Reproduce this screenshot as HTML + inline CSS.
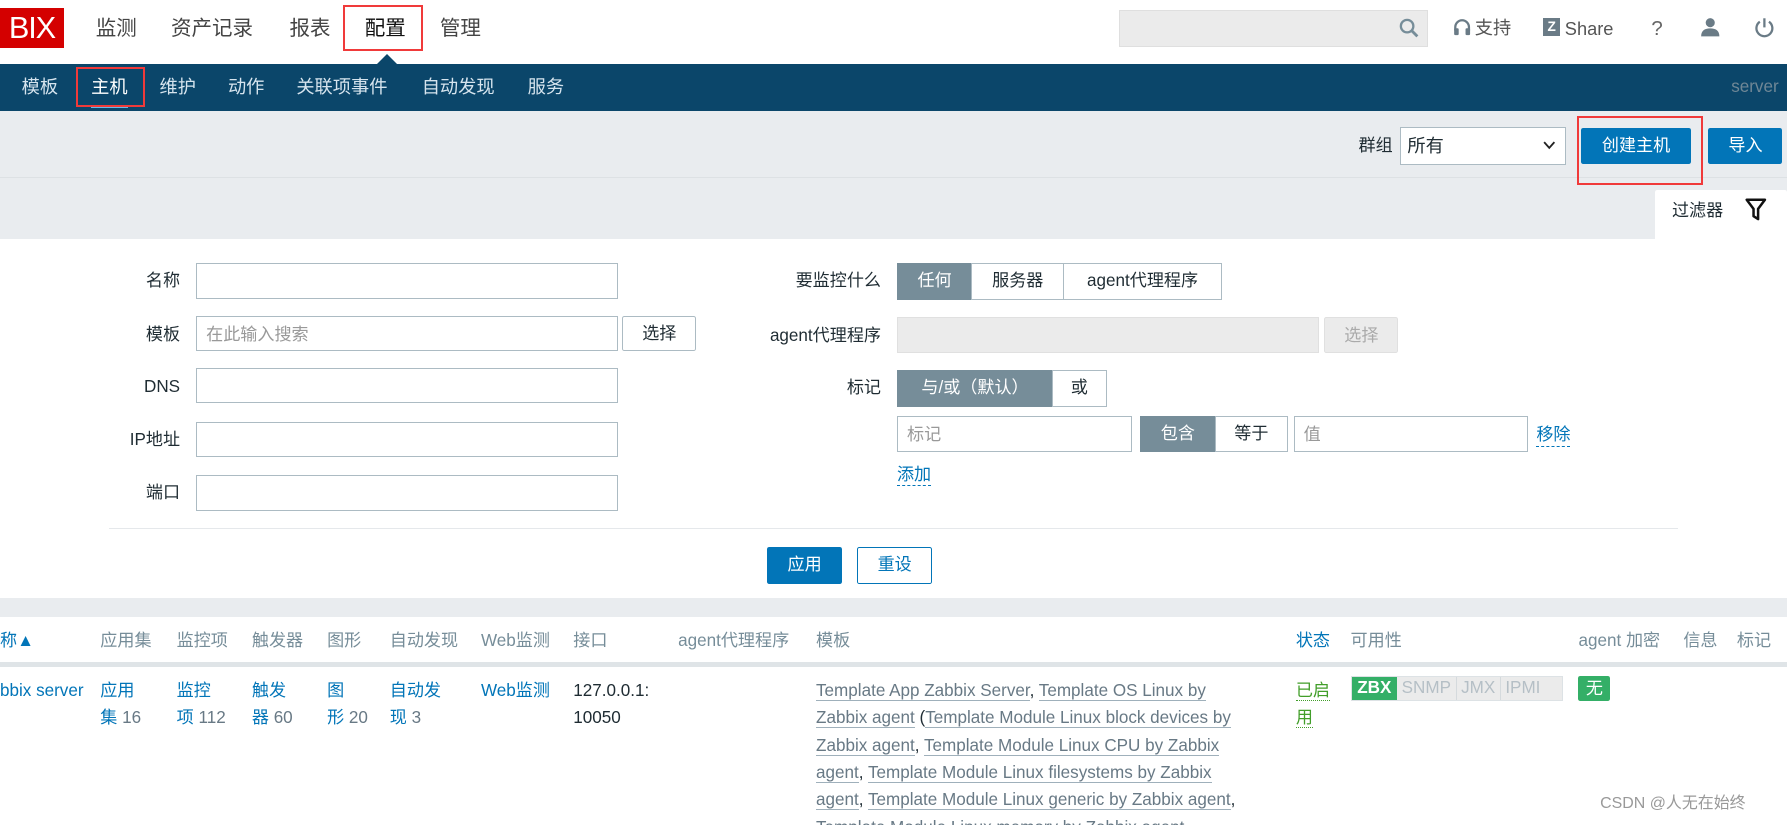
<!DOCTYPE html>
<html><head><meta charset="utf-8">
<style>
html,body{margin:0;padding:0;background:#fff;overflow:hidden;width:1787px;height:825px}
#w{position:relative;width:1568px;height:724px;zoom:1.1397;font-family:"Liberation Sans","Noto Sans CJK SC",sans-serif;color:#1f2c33;font-size:15px;line-height:1.2}
.a{position:absolute;white-space:nowrap}
.inp{position:absolute;border:1px solid #acbbc3;background:#fff;box-sizing:border-box;height:31px}
.btn{position:absolute;box-sizing:border-box;border-radius:2px;text-align:center;font-size:15px}
.seg{position:absolute;box-sizing:border-box;border:1px solid #acbbc3;height:32px;line-height:30px;text-align:center;background:#fff;font-size:15px}
.on{background:#768d99;color:#fff;border-color:#768d99}
.th{position:absolute;top:554px;color:#768d99;font-size:15px}
.lk{color:#0275b8}
.tl{color:#687985;border-bottom:1px solid #9fb0bb}
.cell{display:inline-block;padding:0 4px;border-right:1px solid #d5dadd}
</style></head><body><div id="w">
<div class="a" style="left:0;top:7px;width:56px;height:35px;background:#d40000;color:#fff;font-size:27px;line-height:35px;text-align:center;letter-spacing:-1px">BIX</div>
<div class="a" style="left:84px;top:15px;font-size:18px;color:#444">监测</div>
<div class="a" style="left:150px;top:15px;font-size:18px;color:#444">资产记录</div>
<div class="a" style="left:254px;top:15px;font-size:18px;color:#444">报表</div>
<div class="a" style="left:320px;top:15px;font-size:18px;color:#111">配置</div>
<div class="a" style="left:386px;top:15px;font-size:18px;color:#444">管理</div>
<div class="a" style="left:301px;top:4px;width:70px;height:41px;border:2px solid #f03a3a;box-sizing:border-box"></div>
<div class="a" style="left:331px;top:47px;width:0;height:0;border-left:9px solid transparent;border-right:9px solid transparent;border-bottom:9px solid #0b466a"></div>
<div class="a" style="left:982px;top:9px;width:271px;height:32px;background:#ebebeb;border:1px solid #dfdfdf;box-sizing:border-box"></div>
<svg class="a" style="left:1227px;top:15px" width="20" height="20" viewBox="0 0 20 20"><circle cx="8" cy="8" r="5.5" fill="none" stroke="#768d99" stroke-width="2"/><path d="M12 12l5 5" stroke="#768d99" stroke-width="2.5"/></svg>
<svg class="a" style="left:1275px;top:16px" width="16" height="18" viewBox="0 0 16 18"><path d="M2 11V8a6 6 0 0 1 12 0v3" fill="none" stroke="#6a7b86" stroke-width="2"/><rect x="1" y="9" width="4" height="6" rx="1" fill="#6a7b86"/><rect x="11" y="9" width="4" height="6" rx="1" fill="#6a7b86"/></svg>
<div class="a" style="left:1294px;top:15px;font-size:16px;color:#555">支持</div>
<div class="a" style="left:1354px;top:16px;width:15px;height:16px;background:#6a7b86;color:#fff;font-size:12px;font-weight:bold;text-align:center;line-height:16px">Z</div>
<div class="a" style="left:1373px;top:16px;font-size:16px;color:#555">Share</div>
<div class="a" style="left:1449px;top:15px;font-size:18px;color:#666">?</div>
<svg class="a" style="left:1492px;top:15px" width="18" height="18" viewBox="0 0 18 18"><circle cx="9" cy="5" r="4" fill="#6a7b86"/><path d="M1 17c0-5 3-7 8-7s8 2 8 7z" fill="#6a7b86"/></svg>
<svg class="a" style="left:1538px;top:14px" width="20" height="20" viewBox="0 0 20 20"><path d="M6 5a7 7 0 1 0 8 0" fill="none" stroke="#6a7b86" stroke-width="2"/><path d="M10 2v8" stroke="#6a7b86" stroke-width="2"/></svg>
<div class="a" style="left:0;top:56px;width:1568px;height:41px;background:#0b466a"></div>
<div class="a" style="left:19px;top:67px;font-size:16px;color:#d6e4ee">模板</div>
<div class="a" style="left:80px;top:67px;font-size:16px;color:#fff">主机</div>
<div class="a" style="left:80px;top:92px;width:32px;height:3px;background:#69b8e8"></div>
<div class="a" style="left:67px;top:59px;width:60px;height:35px;border:2px solid #f03a3a;box-sizing:border-box"></div>
<div class="a" style="left:140px;top:67px;font-size:16px;color:#d6e4ee">维护</div>
<div class="a" style="left:200px;top:67px;font-size:16px;color:#d6e4ee">动作</div>
<div class="a" style="left:260px;top:67px;font-size:16px;color:#d6e4ee">关联项事件</div>
<div class="a" style="left:370px;top:67px;font-size:16px;color:#d6e4ee">自动发现</div>
<div class="a" style="left:463px;top:67px;font-size:16px;color:#d6e4ee">服务</div>
<div class="a" style="left:1519px;top:68px;font-size:15px;color:#6f8796">server</div>
<div class="a" style="left:0;top:97px;width:1568px;height:113px;background:#e9ecef"></div>
<div class="a" style="left:0;top:155px;width:1568px;height:1px;background:#dde1e4"></div>
<div class="a" style="left:1192px;top:119px;font-size:15px">群组</div>
<div class="inp" style="left:1228px;top:111px;width:146px;height:34px;padding:7px 6px;font-size:16px">所有<svg style="position:absolute;right:8px;top:12px" width="11" height="8" viewBox="0 0 11 8"><path d="M1 1l4.5 5L10 1" fill="none" stroke="#222" stroke-width="1.6"/></svg></div>
<div class="btn" style="left:1387px;top:112px;width:97px;height:32px;line-height:32px;background:#0275b8;color:#fff">创建主机</div>
<div class="a" style="left:1384px;top:102px;width:110px;height:60px;border:2px solid #f03a3a;box-sizing:border-box"></div>
<div class="btn" style="left:1499px;top:112px;width:65px;height:32px;line-height:32px;background:#0275b8;color:#fff">导入</div>
<div class="a" style="left:1452px;top:167px;width:116px;height:44px;background:#fff;border-radius:2px 2px 0 0"></div>
<div class="a" style="left:1467px;top:176px;font-size:15px">过滤器</div>
<svg class="a" style="left:1531px;top:174px" width="19" height="20" viewBox="0 0 19 20"><path d="M1.5 1.5h16l-6 8v9l-4-2.5v-6.5z" fill="none" stroke="#111" stroke-width="2.2" stroke-linejoin="round"/></svg>
<div class="a" style="left:0;top:210px;width:1568px;height:315px;background:#fff"></div>
<div class="a" style="right:1410px;top:238px">名称</div>
<div class="inp" style="left:172px;top:231px;width:370px"></div>
<div class="a" style="right:1410px;top:285px">模板</div>
<div class="inp" style="left:172px;top:277px;width:370px;padding:7px 8px;color:#999">在此输入搜索</div>
<div class="btn" style="left:546px;top:277px;width:65px;height:31px;line-height:30px;border:1px solid #acbbc3;background:#fff">选择</div>
<div class="a" style="right:1410px;top:331px">DNS</div>
<div class="inp" style="left:172px;top:323px;width:370px"></div>
<div class="a" style="right:1410px;top:377px">IP地址</div>
<div class="inp" style="left:172px;top:370px;width:370px"></div>
<div class="a" style="right:1410px;top:424px">端口</div>
<div class="inp" style="left:172px;top:417px;width:370px"></div>
<div class="a" style="right:795px;top:238px">要监控什么</div>
<div class="seg on" style="left:787px;top:231px;width:66px">任何</div>
<div class="seg" style="left:852px;top:231px;width:82px">服务器</div>
<div class="seg" style="left:933px;top:231px;width:139px">agent代理程序</div>
<div class="a" style="right:795px;top:286px">agent代理程序</div>
<div class="inp" style="left:787px;top:278px;width:370px;height:32px;background:#ebebeb;border-color:#e0e0e0"></div>
<div class="btn" style="left:1162px;top:278px;width:65px;height:32px;line-height:31px;border:1px solid #e0e0e0;background:#ebebeb;color:#aaa">选择</div>
<div class="a" style="right:795px;top:332px">标记</div>
<div class="seg on" style="left:787px;top:325px;width:137px">与/或（默认）</div>
<div class="seg" style="left:923px;top:325px;width:48px">或</div>
<div class="inp" style="left:787px;top:365px;width:206px;height:32px;padding:7px 8px;color:#999">标记</div>
<div class="seg on" style="left:1000px;top:365px;width:67px">包含</div>
<div class="seg" style="left:1066px;top:365px;width:64px">等于</div>
<div class="inp" style="left:1135px;top:365px;width:206px;height:32px;padding:7px 8px;color:#999">值</div>
<div class="a lk" style="left:1348px;top:373px;border-bottom:1px dashed #0275b8">移除</div>
<div class="a lk" style="left:787px;top:408px;border-bottom:1px dashed #0275b8">添加</div>
<div class="a" style="left:96px;top:463px;width:1376px;height:1px;background:#e5e8eb"></div>
<div class="btn" style="left:673px;top:480px;width:66px;height:32px;line-height:32px;background:#0275b8;color:#fff">应用</div>
<div class="btn" style="left:752px;top:480px;width:66px;height:32px;line-height:30px;border:1px solid #0275b8;color:#0275b8;background:#fff">重设</div>
<div class="a" style="left:0;top:525px;width:1568px;height:16px;background:#e9ecef"></div>
<div class="a" style="left:0;top:581px;width:1568px;height:4px;background:#dfe4e7"></div>
<div class="th" style="left:0;color:#0275b8">称▲</div>
<div class="th" style="left:88px">应用集</div>
<div class="th" style="left:155px">监控项</div>
<div class="th" style="left:221px">触发器</div>
<div class="th" style="left:287px">图形</div>
<div class="th" style="left:342px">自动发现</div>
<div class="th" style="left:422px">Web监测</div>
<div class="th" style="left:503px">接口</div>
<div class="th" style="left:595px">agent代理程序</div>
<div class="th" style="left:716px">模板</div>
<div class="th" style="left:1137px;color:#0275b8">状态</div>
<div class="th" style="left:1185px">可用性</div>
<div class="th" style="left:1385px">agent 加密</div>
<div class="th" style="left:1477px">信息</div>
<div class="th" style="left:1524px">标记</div>
<div class="a lk" style="left:0;top:594px;line-height:24px">bbix server</div>
<div class="a lk" style="left:88px;top:594px;line-height:24px">应用<br>集 <span style="color:#687985">16</span></div>
<div class="a lk" style="left:155px;top:594px;line-height:24px">监控<br>项 <span style="color:#687985">112</span></div>
<div class="a lk" style="left:221px;top:594px;line-height:24px">触发<br>器 <span style="color:#687985">60</span></div>
<div class="a lk" style="left:287px;top:594px;line-height:24px">图<br>形 <span style="color:#687985">20</span></div>
<div class="a lk" style="left:342px;top:594px;line-height:24px">自动发<br>现 <span style="color:#687985">3</span></div>
<div class="a lk" style="left:422px;top:594px;line-height:24px">Web监测</div>
<div class="a" style="left:503px;top:594px;line-height:24px">127.0.0.1:<br>10050</div>
<div class="a" style="left:716px;top:594px;line-height:24px;font-size:15px"><span class="tl">Template App Zabbix Server</span>, <span class="tl">Template OS Linux by</span><br><span class="tl">Zabbix agent</span> (<span class="tl">Template Module Linux block devices by</span><br><span class="tl">Zabbix agent</span>, <span class="tl">Template Module Linux CPU by Zabbix</span><br><span class="tl">agent</span>, <span class="tl">Template Module Linux filesystems by Zabbix</span><br><span class="tl">agent</span>, <span class="tl">Template Module Linux generic by Zabbix agent</span>,<br><span class="tl">Template Module Linux memory by Zabbix agent</span></div>
<div class="a" style="left:1137px;top:594px;line-height:24px;color:#429e2a"><span style="border-bottom:1px dotted #429e2a">已启</span><br><span style="border-bottom:1px dotted #429e2a">用</span></div>
<div class="a" style="left:1185px;top:593px;height:22px;width:186px;border:1px solid #dde2e5;background:#ebebeb;box-sizing:border-box;font-size:15px;line-height:20px;color:#b5bfc6"><span style="display:inline-block;background:#34af67;color:#fff;font-weight:bold;padding:0 5px">ZBX</span><span class="cell">SNMP</span><span class="cell">JMX</span><span class="cell" style="border:0">IPMI</span></div>
<div class="a" style="left:1385px;top:593px;width:28px;height:22px;background:#34af67;color:#fff;text-align:center;line-height:22px;border-radius:2px">无</div>
<div class="a" style="left:1404px;top:697px;font-size:14px;color:#999">CSDN @人无在始终</div>
</div></body></html>
